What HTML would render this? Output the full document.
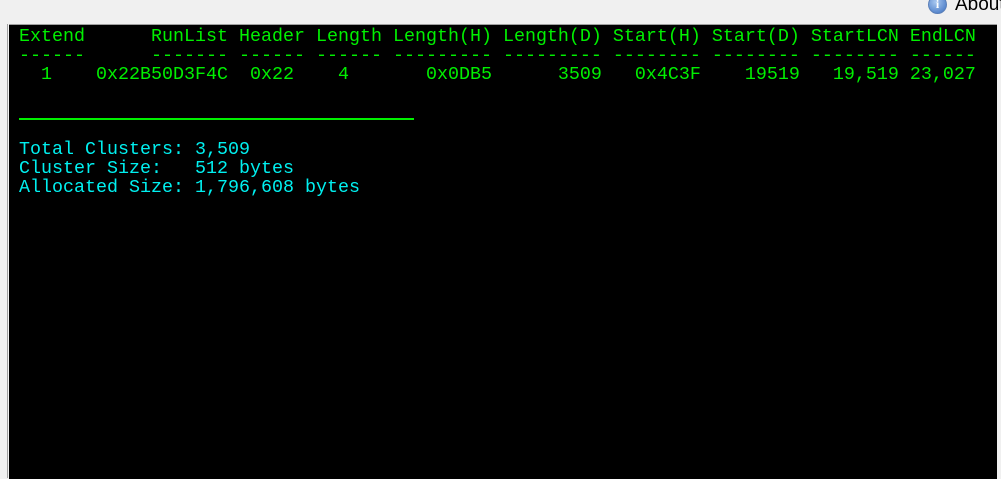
<!DOCTYPE html>
<html><head><style>
body{margin:0;width:1001px;height:478px;background:#f0f0f0;position:relative;overflow:hidden;font-family:"Liberation Sans",sans-serif}
#lft{position:absolute;left:7px;top:24px;width:1px;height:454px;background:#a0a0a0}
#term{position:absolute;left:9px;top:24px;width:988px;height:454px;background:#000;border-top:1px solid #a0a0a0}
pre{margin:0;position:absolute;left:10px;font-family:"Liberation Mono",monospace;font-size:18.33px;line-height:19px;white-space:pre}
.g{color:#00f000}.c{color:#00f0f0}
#hr{position:absolute;left:10px;top:93px;width:395px;height:2px;background:#00f000}
#ico{position:absolute;left:928px;top:-5px;width:17px;height:17px;border-radius:50%;background:radial-gradient(circle at 40% 35%,#a9c8f0,#3a6fc0);border:1px solid #5a7fb8;color:#fff;font:bold 12px "Liberation Serif",serif;text-align:center;line-height:17px}
#ab{position:absolute;left:955px;top:-6px;font-size:19px;color:#000}
</style></head><body>
<div id="ico">i</div><div id="ab">About</div>
<div id="lft"></div>
<div id="term">
<pre class="g" style="top:2px">Extend      RunList Header Length Length(H) Length(D) Start(H) Start(D) StartLCN EndLCN
------      ------- ------ ------ --------- --------- -------- -------- -------- ------
  1    0x22B50D3F4C  0x22    4       0x0DB5      3509   0x4C3F    19519   19,519 23,027</pre>
<div id="hr"></div>
<pre class="c" style="top:115px">Total Clusters: 3,509
Cluster Size:   512 bytes
Allocated Size: 1,796,608 bytes</pre>
</div>
</body></html>
